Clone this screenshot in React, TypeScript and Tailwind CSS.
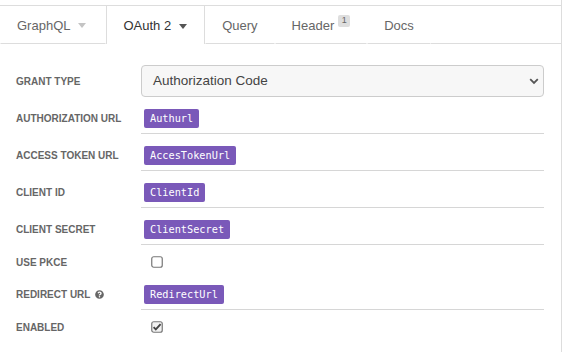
import React from 'react';
import { FaQuestionCircle } from 'react-icons/fa';

const Caret: React.FC<{ color: string }> = ({ color }) => (
  <svg width="8" height="5" viewBox="0 0 8 5" className="ml-2">
    <path d="M0 0h8L4 5z" fill={color} />
  </svg>
);

const Pill: React.FC<{ text: string }> = ({ text }) => (
  <span className="ml-[3px] inline-flex h-[19px] items-center rounded-[2px] bg-[#7a59b9] px-[6px] font-['DejaVu_Sans_Mono',monospace] text-[10.25px] text-white">
    {text}
  </span>
);

const Checkbox: React.FC<{ checked?: boolean }> = ({ checked }) => (
  <svg width="12" height="12" viewBox="0 0 12 12" className="ml-[10px]">
    <rect x="0.75" y="0.75" width="10.5" height="10.5" rx="2" fill={checked ? '#f2f2f2' : '#fff'} stroke="#777" strokeWidth="1.2" />
    {checked && <path d="M2.6 6.2l2.2 2.2L9.6 3.2" fill="none" stroke="#444" strokeWidth="1.9" />}
  </svg>
);

type RowProps = {
  label: string;
  help?: boolean;
  compact?: boolean;
  children: React.ReactNode;
};

const Row: React.FC<RowProps> = ({ label, help, compact, children }) => (
  <div className="flex">
    <div className={compact ? 'w-[125px] shrink-0 pt-[11px]' : 'w-[125px] shrink-0 pt-3'}>
      <div className={compact ? 'flex h-3 items-center' : 'flex h-[19px] items-center'}>
        <span className="text-[10px] font-bold text-[#666]">{label}</span>
        {help && <FaQuestionCircle className="ml-[5px] text-[#666]" size={9} />}
      </div>
    </div>
    <div
      className={
        compact
          ? 'flex flex-1 items-center pb-[5px] pt-[11px]'
          : 'flex flex-1 items-center border-b border-[#d6d6d6] pb-[5px] pt-3'
      }
    >
      {children}
    </div>
  </div>
);

export default function App() {
  return (
    <div className="h-[352px] w-[562px] border-r border-[#ddd] bg-white pt-[5px] font-['Liberation_Sans',Arial,sans-serif]">
      {/* tabs */}
      <div className="flex border-t border-[#ddd] text-[13px]">
        <div className="flex h-[38px] items-center border-x border-b border-transparent border-b-[#ddd] pl-4 pr-[19px] pt-[2px] text-[#666]">
          GraphQL
          <Caret color="#c4c4c4" />
        </div>
        <div className="flex h-[38px] items-center border-x border-[#ddd] border-b-transparent pl-4 pr-[17px] pt-[2px] text-[#333]">
          OAuth 2
          <Caret color="#555" />
        </div>
        <div className="flex h-[38px] items-center border-x border-b border-transparent border-b-[#ddd] px-4 pt-[2px] text-[#666]">
          Query
        </div>
        <div className="flex h-[38px] items-center border-x border-b border-transparent border-b-[#ddd] px-4 pt-[2px] text-[#666]">
          Header
          <span className="mb-[10px] ml-[4px] flex h-[12px] w-[12px] items-center justify-center rounded-[2px] bg-[#dedede] text-[9px] text-[#666]">
            1
          </span>
        </div>
        <div className="flex h-[38px] items-center border-x border-b border-transparent border-b-[#ddd] px-4 pt-[2px] text-[#666]">
          Docs
        </div>
        <div className="flex-1 border-b border-[#ddd]" />
      </div>

      {/* form */}
      <div className="pl-4 pr-[17px] pt-[9px]">
        <div className="flex">
          <div className="flex w-[125px] shrink-0 items-center pt-3">
            <span className="text-[10px] font-bold text-[#666]">GRANT TYPE</span>
          </div>
          <div className="flex-1 pt-3">
            <div className="flex h-8 items-center justify-between rounded border border-[#ccc] bg-[#f7f7f7] pl-[11px] pr-[4px] text-[13.5px] text-[#444]">
              Authorization Code
              <svg width="10" height="7" viewBox="0 0 10 7">
                <path d="M1.2 1.2L5 5l3.8-3.8" fill="none" stroke="#555" strokeWidth="1.8" />
              </svg>
            </div>
          </div>
        </div>
        <Row label="AUTHORIZATION URL">
          <Pill text="Authurl" />
        </Row>
        <Row label="ACCESS TOKEN URL">
          <Pill text="AccesTokenUrl" />
        </Row>
        <Row label="CLIENT ID">
          <Pill text="ClientId" />
        </Row>
        <Row label="CLIENT SECRET">
          <Pill text="ClientSecret" />
        </Row>
        <Row label="USE PKCE" compact>
          <Checkbox />
        </Row>
        <Row label="REDIRECT URL" help>
          <Pill text="RedirectUrl" />
        </Row>
        <Row label="ENABLED" compact>
          <Checkbox checked />
        </Row>
      </div>
    </div>
  );
}
